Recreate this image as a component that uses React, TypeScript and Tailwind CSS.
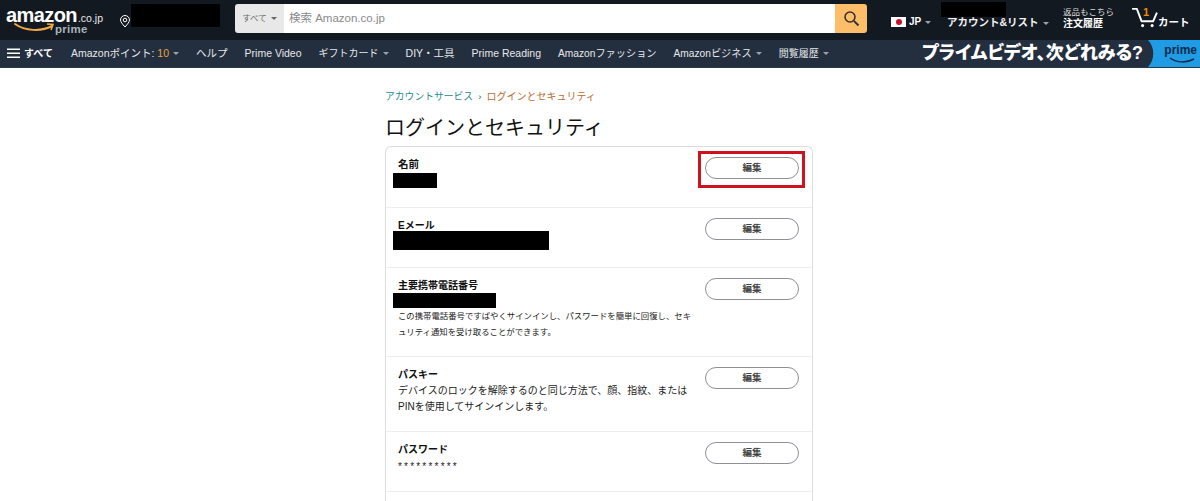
import React from "react";

const FONT = "font-['Liberation_Sans','Noto_Sans_CJK_JP',sans-serif]";

function Caret({ className = "" }: { className?: string }) {
  return <span className={`inline-block w-0 h-0 border-x-[3px] border-x-transparent border-t-[3px] border-t-[#9aa3ad] ml-[4px] align-middle ${className}`} />;
}

function NavItem({ children, caret, size = "text-[10.5px]" }: { children: React.ReactNode; caret?: boolean; size?: string }) {
  return (
    <span className={`${size} text-[#e6e8ea] whitespace-nowrap flex items-center`}>
      {children}
      {caret && <Caret />}
    </span>
  );
}

function EditBtn() {
  return (
    <div className="w-[94px] h-[22px] rounded-full border border-[#8d9096] bg-white flex items-center justify-center text-[9.5px] font-bold text-[#444]">
      編集
    </div>
  );
}

function CardRow({ title, titleSize = "text-[10px]", h, bar, desc, stars, pt, btnPt = "pt-[10px]", children }: {
  title: string; titleSize?: string; h: string; bar?: string; desc?: React.ReactNode; stars?: boolean; pt: string; btnPt?: string; children?: React.ReactNode;
}) {
  return (
    <div className={`relative flex justify-between pl-[12px] pr-[13px] border-b border-[#eeeeee] ${h}`}>
      <div className={`w-[296px] ${pt}`}>
        <div className={`${titleSize} leading-[13px] font-bold text-[#111] whitespace-nowrap`}>{title}</div>
        {bar && <div className={`bg-black -ml-[5px] ${bar}`} />}
        {desc}
        {stars && <div className="text-[10px] leading-[14px] text-[#222] tracking-[2.2px] mt-[4px]">**********</div>}
      </div>
      <div className={btnPt}>
        <EditBtn />
      </div>
      {children}
    </div>
  );
}

export default function App() {
  return (
    <div className={`w-[1200px] h-[501px] overflow-hidden bg-white ${FONT}`}>
      {/* top bar */}
      <div className="h-[40px] bg-[#131921] flex items-start text-white">
        <div className="w-[112px] h-[40px] pl-[6px] relative shrink-0">
          <div className="flex items-baseline pt-[7px]">
            <span className="text-[20px] font-bold tracking-[-0.6px] leading-[16px]">amazon</span>
            <span className="text-[10.5px] leading-[12px] ml-[1px] text-[#e8e8e8]">.co.jp</span>
          </div>
          <span className="absolute left-[55px] top-[24px] text-[11.5px] font-bold tracking-[0.3px] leading-[10px] text-[#a9b2bb]">prime</span>
          <svg className="absolute left-[14px] top-[22px]" width="42" height="11" viewBox="0 0 42 11" fill="none">
            <path d="M1 2 C11 9 27 10 38 4" stroke="#f3a847" strokeWidth="2" strokeLinecap="round" />
            <path d="M33 2 L39 2.5 L37 8" stroke="#f3a847" strokeWidth="1.6" />
          </svg>
        </div>
        <svg className="mt-[15px] ml-[7px] shrink-0" width="12" height="13" viewBox="0 0 11 13" fill="none">
          <path d="M5.5 12 C3 9 1 7 1 5 A4.5 4.5 0 0 1 10 5 C10 7 8 9 5.5 12 Z" stroke="#fff" strokeWidth="1" />
          <circle cx="5.5" cy="5" r="1.8" stroke="#fff" strokeWidth="1" />
        </svg>
        <div className="w-[89px] h-[23px] bg-black mt-[4px] shrink-0" />
        <div className="ml-[15px] mt-[4px] w-[632px] h-[29px] flex rounded-[3px] overflow-hidden shrink-0">
          <div className="w-[49px] bg-[#e8e8e8] text-[#666] text-[8.5px] flex items-center justify-center">
            すべて<Caret className="!border-t-[#666]" />
          </div>
          <div className="flex-1 bg-white text-[#8a8a8a] text-[11.5px] flex items-center pl-[5px]">検索 Amazon.co.jp</div>
          <div className="w-[32px] bg-[#febd69] flex items-center justify-center">
            <svg width="17" height="17" viewBox="0 0 17 17" fill="none">
              <circle cx="7" cy="7" r="5" stroke="#333" strokeWidth="1.6" />
              <path d="M11 11 L15.5 15.5" stroke="#333" strokeWidth="2" />
            </svg>
          </div>
        </div>
        <div className="ml-[24px] mt-[17px] w-[15px] h-[10px] bg-white flex items-center justify-center shrink-0">
          <div className="w-[6px] h-[6px] rounded-full bg-[#c8102e]" />
        </div>
        <div className="ml-[3px] mt-[15px] text-[10px] font-bold leading-[14px] flex items-center w-[30px] shrink-0">JP<Caret /></div>
        <div className="relative w-[116px] shrink-0 mt-[15px] text-[10.5px] font-bold leading-[14px] whitespace-nowrap ml-[8px] text-[#f0f0f0]">
          アカウント&リスト<Caret />
          <div className="absolute left-[-6px] top-[-13px] w-[65px] h-[15px] bg-black" />
        </div>
        <div className="w-[68px] shrink-0 mt-[7px] whitespace-nowrap">
          <div className="text-[8.5px] leading-[11px] text-[#dcdcdc]">返品もこちら</div>
          <div className="text-[10px] leading-[11px] font-bold">注文履歴</div>
        </div>
        <div className="relative shrink-0 flex items-start">
          <svg className="mt-[7px]" width="27" height="21" viewBox="0 0 28 22" fill="none">
            <path d="M1 2 L6 2 L11 15 L23 15 L27 6" stroke="#fff" strokeWidth="2" strokeLinejoin="round" />
            <circle cx="12" cy="19.5" r="1.6" fill="#fff" />
            <circle cx="22" cy="19.5" r="1.6" fill="#fff" />
          </svg>
          <span className="absolute left-[12px] top-[6px] text-[#f08804] text-[11px] font-bold leading-[12px]">1</span>
          <span className="text-[10.5px] font-bold mt-[15px] leading-[14px] whitespace-nowrap">カート</span>
        </div>
      </div>

      {/* nav */}
      <div className="h-[28px] bg-[#232f3e] flex items-center relative border-b border-[#2b3a4a]">
        <div className="flex items-center pl-[7px] w-[71px] shrink-0 text-white text-[10px] font-bold">
          <svg width="14" height="11" viewBox="0 0 14 11" className="mr-[3px]">
            <rect y="0.5" width="13" height="1.5" fill="#fff" />
            <rect y="4.5" width="13" height="1.5" fill="#fff" />
            <rect y="8.5" width="13" height="1.5" fill="#fff" />
          </svg>
          すべて
        </div>
        <div className="flex items-center gap-[17px]">
          <NavItem caret>Amazonポイント:&nbsp;<span className="text-[#e8a13c]">10</span></NavItem>
          <NavItem>ヘルプ</NavItem>
          <NavItem>Prime Video</NavItem>
          <NavItem caret size="text-[10px]">ギフトカード</NavItem>
          <NavItem>DIY・工具</NavItem>
          <NavItem>Prime Reading</NavItem>
          <NavItem size="text-[10.2px]">Amazonファッション</NavItem>
          <NavItem caret size="text-[10.2px]">Amazonビジネス</NavItem>
          <NavItem caret size="text-[10px]">閲覧履歴</NavItem>
        </div>
        <div className="ml-auto flex items-center h-full relative">
          <span className="text-white text-[18px] font-black whitespace-nowrap mr-[57px] [font-feature-settings:'palt']">プライムビデオ、次どれみる?</span>
          <svg className="absolute right-0 top-0" width="52" height="27" viewBox="0 0 52 27">
            <path d="M0 0 H52 V27 H0 C7 20 7 7 0 0 Z" fill="#1f9ce4" />
          </svg>
          <span className="absolute right-[3px] top-[3px] text-[#0b2a4a] text-[12px] font-bold leading-[14px]">prime</span>
          <svg className="absolute right-[5px] top-[17px]" width="26" height="7" viewBox="0 0 26 7" fill="none">
            <path d="M1 1 C8 6 18 6 25 2" stroke="#0b2a4a" strokeWidth="1.5" />
          </svg>
        </div>
      </div>

      {/* main */}
      <div className="w-[428px] ml-[385px]">
        <div className="mt-[22px] text-[9.8px] leading-[14px] whitespace-nowrap">
          <span className="text-[#2a8a8f]">アカウントサービス</span>
          <span className="text-[#555] mx-[5px]">›</span>
          <span className="text-[#b96d30] text-[10px]">ログインとセキュリティ</span>
        </div>
        <h1 className="mt-[10px] text-[20px] leading-[28px] font-normal text-[#111] whitespace-nowrap">ログインとセキュリティ</h1>
        <div className="mt-[4px] border border-[#dddddd] rounded-t-[6px] border-b-0">
          <CardRow title="名前" titleSize="text-[10.5px]" h="h-[61px]" pt="pt-[11px]" bar="w-[44px] h-[15px] mt-[2px]">
            <div className="absolute left-[312px] top-[4px] w-[107px] h-[37px] border-[3px] border-[#d0121f]" />
          </CardRow>
          <CardRow title="Eメール" h="h-[60px]" pt="pt-[11px]" bar="w-[156px] h-[19px] -mt-[1px]" />
          <CardRow
            title="主要携帯電話番号"
            h="h-[89px]"
            pt="pt-[11px]"
            bar="w-[103px] h-[15px] mt-[1px]"
            desc={<div className="text-[8.4px] leading-[16px] text-[#222]">この携帯電話番号ですばやくサインインし、パスワードを簡単に回復し、セキュリティ通知を受け取ることができます。</div>}
          />
          <CardRow
            title="パスキー"
            h="h-[75px]"
            pt="pt-[11px]"
            desc={<div className="mt-[2px] text-[10px] leading-[16px] text-[#222]">デバイスのロックを解除するのと同じ方法で、顔、指紋、またはPINを使用してサインインします。</div>}
          />
          <CardRow title="パスワード" h="h-[60px]" pt="pt-[11px]" stars />
          <div className="h-[20px]" />
        </div>
      </div>
    </div>
  );
}
